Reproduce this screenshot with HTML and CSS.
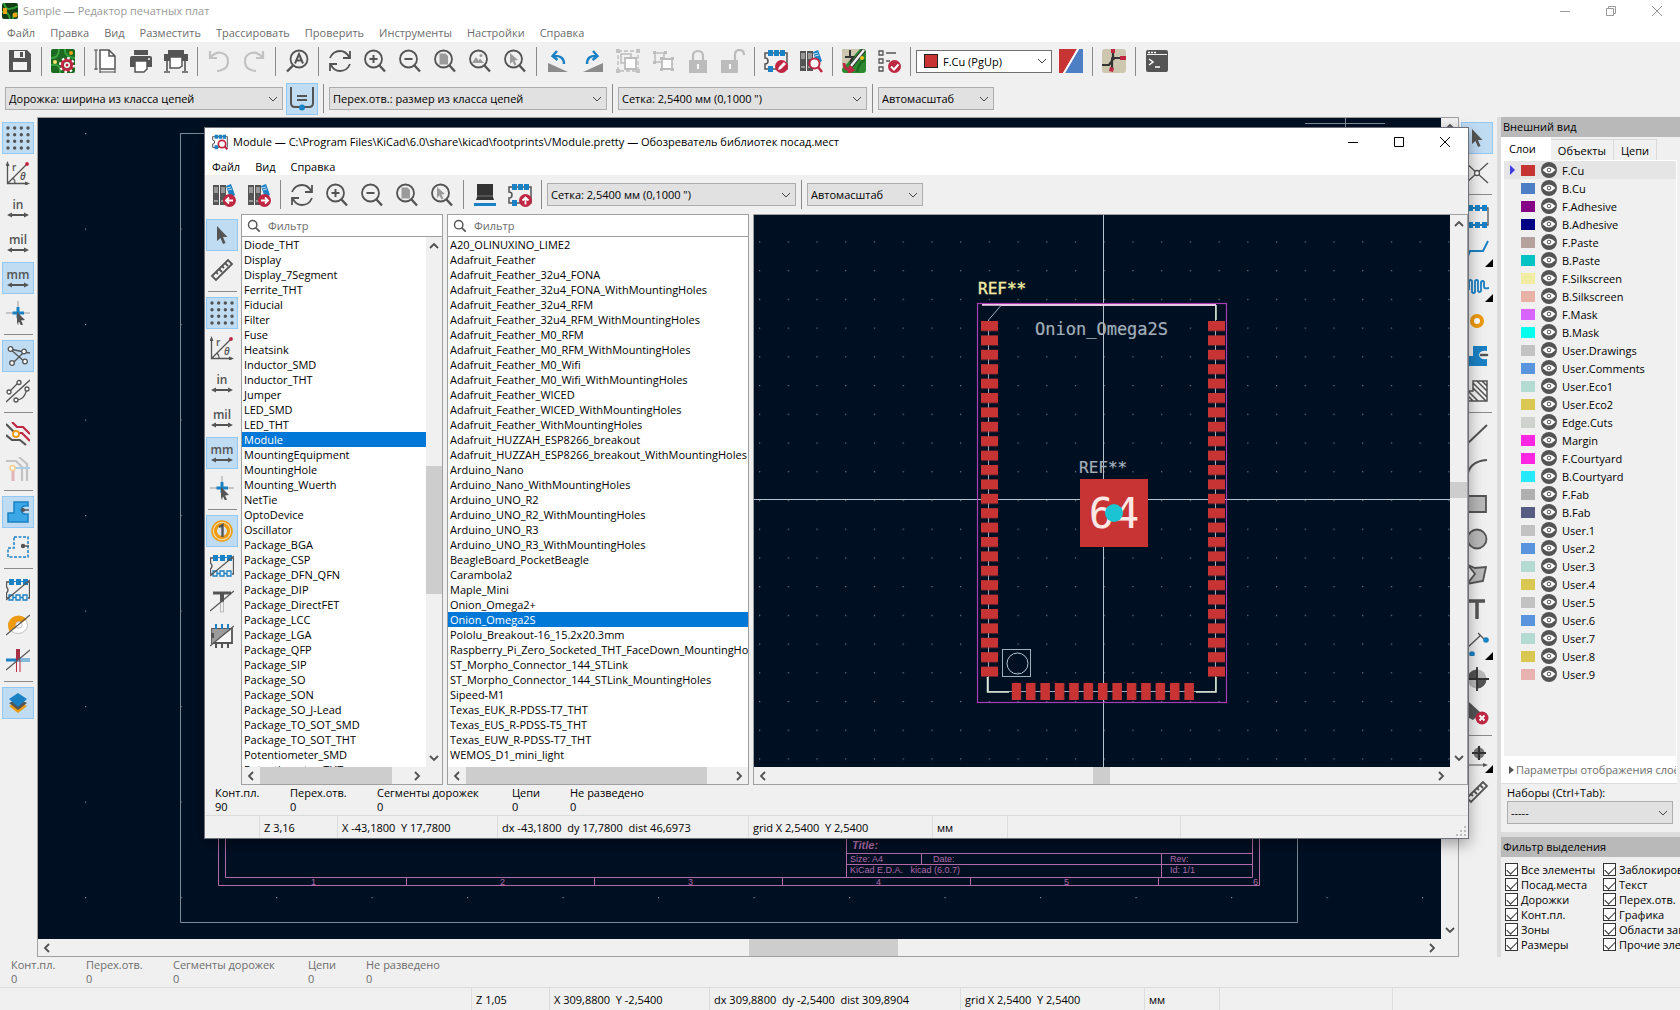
FILE: index.html
```html
<!DOCTYPE html>
<html lang="ru">
<head>
<meta charset="utf-8">
<title>Sample — Редактор печатных плат</title>
<link rel="stylesheet" href="styles.css">
</head>
<body>
<svg class="sprite" aria-hidden="true">
<defs>
<g id="lens"><circle cx="10.500" cy="10" r="8.500" fill="none" stroke="#545454" stroke-width="1.800"/><path d="M16.500 16.500L22 22.500" stroke="#545454" stroke-width="2.400"/></g>
<g id="badge"><circle cx="17.500" cy="17.500" r="6.500" fill="#bf2641"/></g>
<g id="chip"><path d="M1 4H23V20H1V15a3 3 0 0 0 0-6Z" fill="none" stroke="#545454" stroke-width="1.500"/><path d="M4 1h5v6H4zM10 1h5v6h-5zM16 1h5v6h-5zM4 17h5v6H4z" fill="#1a81c4"/></g>
<g id="books"><path d="M1 2h6v20H1zM8 2h6v20H8z" fill="#545454"/><path d="M2 5h4M2 7h4M2 9h4M2 18h4M9 5h4M9 7h4M9 9h4M9 18h4" stroke="#ddd" stroke-width="1"/><path d="M14 3l5-2 4 11-5 3z" fill="#1a81c4"/><path d="M15 5l4-1M16 7l4-1" stroke="#bfe0f5"/></g>
<g id="slash"><path d="M0 22L24 2" stroke="#545454" stroke-width="1.200"/></g>
<g id="dblarrow"><path d="M3 19H21" stroke="#545454" stroke-width="2"/><path d="M1 19l5-2.500v5zM23 19l-5-2.500v5z" fill="#545454"/></g>
</defs>
<symbol id="i-app" viewBox="0 0 16 16"><rect width="16" height="16" rx="2" fill="#123d16"/><path d="M2 0q1 6 5 6t9-3M0 9q6-2 8 7M11 16q0-6 5-6" fill="none" stroke="#2f9b35" stroke-width="2"/><path d="M1 5h4v6H1z" fill="#e8a316"/><circle cx="13" cy="12" r="2.500" fill="#e8a316"/></symbol>
<symbol id="i-save" viewBox="0 0 24 24"><path d="M1 1h18l4 4v18H1z" fill="#545454"/><path d="M6 2h11v7H6zM5 13h14v8H5z" fill="#f3f3f3"/><path d="M12 3h3v5h-3z" fill="#545454"/></symbol>
<symbol id="i-setup" viewBox="0 0 24 24"><rect width="24" height="24" rx="2" fill="#1d6b22"/><path d="M0 9q8 0 8-9M0 16q10-2 9 8M14 0q-1 8 10 9" fill="none" stroke="#39a340" stroke-width="2"/><circle cx="4" cy="13" r="2" fill="#f5e56b"/><circle cx="20" cy="4" r="2" fill="#e8a316"/><circle cx="16" cy="16" r="5" fill="none" stroke="#bf2641" stroke-width="3.500"/><circle cx="16" cy="16" r="7" fill="none" stroke="#fff" stroke-width="2" stroke-dasharray="2.500 3"/><circle cx="16" cy="16" r="3" fill="#fff"/><circle cx="16" cy="16" r="1.500" fill="#bf2641"/></symbol>
<symbol id="i-page" viewBox="0 0 24 24"><path d="M6 1h9l6 6v13H6zM15 1v6h6" fill="#fff" stroke="#545454" stroke-width="1.500"/><path d="M2 1v20M0 1h4M0 20h4M6 23h15M6 21v3M21 21v3" stroke="#545454" stroke-width="1.200"/></symbol>
<symbol id="i-print" viewBox="0 0 24 24"><path d="M5 1h14v5H5z" fill="#545454"/><path d="M1 9q0-2 2-2h18q2 0 2 2v9H1z" fill="#545454"/><path d="M6 12h12v8l-3 3H6z" fill="#fff" stroke="#545454" stroke-width="1.500"/><circle cx="20" cy="10" r="1" fill="#fff"/></symbol>
<symbol id="i-plot" viewBox="0 0 24 24"><path d="M4 1h16v4H4zM0 5h24v7H0z" fill="#545454"/><path d="M6 8h12v9l-3 2H6z" fill="#fff" stroke="#545454" stroke-width="1.500"/><path d="M3 12v10M21 12v10M0 23h6M18 23h6" stroke="#545454" stroke-width="1.600"/></symbol>
<symbol id="i-undo" viewBox="0 0 24 24"><path d="M3 2v7h7M3.500 8.500Q9 2 15 4t6 8-4 8-7 2" fill="none" stroke="#c2c2c2" stroke-width="2.200"/></symbol>
<symbol id="i-redo" viewBox="0 0 24 24"><path d="M21 2v7h-7M20.500 8.500Q15 2 9 4t-6 8 4 8 7 2" fill="none" stroke="#c2c2c2" stroke-width="2.200"/></symbol>
<symbol id="i-find" viewBox="0 0 24 24"><circle cx="14" cy="10" r="8.500" fill="none" stroke="#545454" stroke-width="1.800"/><path d="M8 16.500L2 22.500" stroke="#545454" stroke-width="2.400"/><path d="M10 14.500L14 5l4 9.500M11.500 11.500h5" fill="none" stroke="#545454" stroke-width="2"/></symbol>
<symbol id="i-refresh" viewBox="0 0 24 24"><path d="M2 9q3-7 10-7 6 0 9 6M22 2v7h-7M22 15q-3 7-10 7-6 0-9-6M2 22v-7h7" fill="none" stroke="#545454" stroke-width="1.800"/></symbol>
<symbol id="i-zin" viewBox="0 0 24 24"><use href="#lens"/><path d="M10.500 6v8M6.500 10h8" stroke="#545454" stroke-width="2"/></symbol>
<symbol id="i-zout" viewBox="0 0 24 24"><use href="#lens"/><path d="M6.500 10h8" stroke="#545454" stroke-width="2"/></symbol>
<symbol id="i-zfit" viewBox="0 0 24 24"><use href="#lens"/><path d="M6.500 4.500h6l2.500 2.500v8.500H6.500z" fill="#9b9b9b"/></symbol>
<symbol id="i-zobj" viewBox="0 0 24 24"><use href="#lens"/><path d="M4 14l4-6 2.500 3.500L12 9.500l4 4.500z" fill="#9b9b9b"/><circle cx="13" cy="6.500" r="1.500" fill="#9b9b9b"/></symbol>
<symbol id="i-zsel" viewBox="0 0 24 24"><use href="#lens"/><path d="M7 4l8 7-3.500.5 2 4-2 1-2-4L7 15z" fill="#9b9b9b"/></symbol>
<symbol id="i-rccw" viewBox="0 0 24 24"><path d="M2 14v9h20z" fill="#8b8b8b"/><path d="M11 2L6.500 7l5 4M7 7q11-1 11 8" fill="none" stroke="#1a81c4" stroke-width="2.400"/></symbol>
<symbol id="i-rcw" viewBox="0 0 24 24"><path d="M22 14v9H2z" fill="#8b8b8b"/><path d="M12 2l4.500 5-5 4M16 7Q6 6 6 15" fill="none" stroke="#1a81c4" stroke-width="2.400"/></symbol>
<symbol id="i-group" viewBox="0 0 24 24"><path d="M2 2h20v20H2z" fill="none" stroke="#bcbcbc" stroke-width="1.300" stroke-dasharray="4 2"/><path d="M0 0h4v4H0zM20 0h4v4h-4zM0 20h4v4H0zM20 20h4v4h-4z" fill="#c2c2c2"/><path d="M5 5h10v9H5z" fill="none" stroke="#bcbcbc" stroke-width="1.500"/><path d="M9 9h11v11H9z" fill="#fff" stroke="#bcbcbc" stroke-width="1.800"/></symbol>
<symbol id="i-ungroup" viewBox="0 0 24 24"><path d="M4 4h9v9H4z" fill="none" stroke="#bcbcbc" stroke-width="1.500"/><path d="M2 2h3v3H2zM13 2h3v3h-3zM2 12h3v3H2z" fill="#bcbcbc"/><path d="M11 10h10v10H11z" fill="#fff" stroke="#bcbcbc" stroke-width="1.800"/><path d="M9 8h3v3H9zM20 8h3v3h-3zM9 19h3v3H9zM20 19h3v3h-3z" fill="#bcbcbc"/></symbol>
<symbol id="i-lock" viewBox="0 0 24 24"><path d="M3 11h18v13H3z" fill="#bcbcbc"/><path d="M7 12V7q0-5 5-5t5 5v5" fill="none" stroke="#bcbcbc" stroke-width="2.200"/><path d="M11 15h2v5h-2z" fill="#fff"/></symbol>
<symbol id="i-unlock" viewBox="0 0 24 24"><path d="M0 11h17v13H0z" fill="#bcbcbc"/><path d="M14 12V6q0-5 4.500-5T23 6" fill="none" stroke="#bcbcbc" stroke-width="2.200"/><path d="M8 15h2v5H8z" fill="#fff"/></symbol>
<symbol id="i-fped" viewBox="0 0 24 24"><use href="#chip"/><use href="#badge"/><path d="M14 21l1-3 5-5 2 2-5 5z" fill="#fff"/></symbol>
<symbol id="i-fplib" viewBox="0 0 24 24"><use href="#books"/><circle cx="15.500" cy="14.500" r="5" fill="#fff" stroke="#bf2641" stroke-width="2"/><path d="M19 18l4 5" stroke="#bf2641" stroke-width="2.500"/></symbol>
<symbol id="i-fpbrowse" viewBox="0 0 24 24"><use href="#chip"/><circle cx="15" cy="15" r="5.500" fill="#fff" stroke="#bf2641" stroke-width="2.500"/><path d="M19 19l4 4" stroke="#bf2641" stroke-width="3"/></symbol>
<symbol id="i-update" viewBox="0 0 24 24"><rect width="24" height="24" rx="3" fill="#2c8a31"/><path d="M3 0h15L0 20V3q0-3 3-3z" fill="#cdc7b0"/><path d="M8 1v7M3 8h8l-3 5" fill="none" stroke="#333" stroke-width="2"/><path d="M23 11q-6 2-8 12" fill="none" stroke="#1d6b22" stroke-width="2.500"/><path d="M22 1L9 17" stroke="#333" stroke-width="4.500"/><path d="M22 1L9 17" stroke="#f0f0f0" stroke-width="2.500"/><circle cx="20" cy="9" r="2" fill="#f2c21a"/><path d="M2 14q0 7 7 7M7 17l4 4-5 3" fill="none" stroke="#bf2641" stroke-width="2.800"/></symbol>
<symbol id="i-drc" viewBox="0 0 24 24"><path d="M2 2h4v4H2zM2 10h4v4H2zM2 18h4v4H2zM9 4h10M9 12h4" fill="none" stroke="#545454" stroke-width="1.300"/><use href="#badge"/><path d="M14 17.500l3 3 4.500-5" fill="none" stroke="#fff" stroke-width="2"/></symbol>
<symbol id="i-pair" viewBox="0 0 24 24"><path d="M0 0h18L4 24H0z" fill="#c83434"/><path d="M20 0h4v24H6z" fill="#4d7fc4"/><path d="M18 0h2L6 24H4z" fill="#fff"/></symbol>
<symbol id="i-route" viewBox="0 0 24 24"><rect width="24" height="24" rx="3" fill="#cdc7b0"/><path d="M11 3v6l-1 2v8M11 9h8M10 12l-3 4H0" fill="none" stroke="#333" stroke-width="2.200"/><path d="M9 0h4v4H9zM18 7h6v4h-6zM8 18l4 1-1 4-4-1z" fill="#bf2641"/><circle cx="11" cy="9.500" r="2" fill="#333"/></symbol>
<symbol id="i-console" viewBox="0 0 24 24"><rect x="1" y="1" width="22" height="22" rx="2" fill="#545454"/><path d="M2 5.500h20" stroke="#f0f0f0"/><path d="M3 3.500h2M6 3.500h2M9 3.500h2" stroke="#fff" stroke-width="1.500"/><path d="M4 10l4 3-4 3M10 18h5" fill="none" stroke="#fff" stroke-width="1.500"/></symbol>
<symbol id="i-netwidth" viewBox="0 0 24 24"><path d="M1 0v16q0 4 4 4h14q4 0 4-4V0M7 9h10M7 13h10" fill="none" stroke="#545454" stroke-width="2"/><circle cx="12" cy="20.500" r="3" fill="#1a81c4"/></symbol>
<symbol id="i-grid" viewBox="0 0 24 24"><path d="M2 2h20.100M2 8.700h20.100M2 15.300h20.100M2 22h20.100" stroke="#545454" stroke-width="3.400" stroke-linecap="round" stroke-dasharray="0 6.670"/></symbol>
<symbol id="i-polar" viewBox="0 0 24 24"><path d="M1.500 3v19.500H22M2 22L21 3M7 17q2 2 2 5" fill="none" stroke="#545454" stroke-width="1.300"/><path d="M1.500 0l2 5h-4zM24 22.500l-5 2v-4z" fill="#545454"/><circle cx="21" cy="3" r="1.900" fill="#bf2641"/><text x="6" y="10" class="glyph">r</text><text x="14" y="19" class="glyph glyph-i">θ</text></symbol>
<symbol id="i-in" viewBox="0 0 24 24"><text x="12" y="13" text-anchor="middle" class="unit">in</text><use href="#dblarrow"/></symbol>
<symbol id="i-mil" viewBox="0 0 24 24"><text x="12" y="13" text-anchor="middle" class="unit">mil</text><use href="#dblarrow"/></symbol>
<symbol id="i-mm" viewBox="0 0 24 24"><text x="12" y="13" text-anchor="middle" class="unit">mm</text><use href="#dblarrow"/></symbol>
<symbol id="i-cursor" viewBox="0 0 24 24"><path d="M0 12h24M12 0v24" stroke="#9b9b9b"/><path d="M12 6v11M6.500 12H18" stroke="#1a81c4" stroke-width="3"/><path d="M11 11l8 8-4 .5 2 4-2 1-2-4-2 2.500z" fill="#545454"/></symbol>
<symbol id="i-rats" viewBox="0 0 24 24"><path d="M4 5l14 3 6 1M18 8L6 20M4 5l15 13" fill="none" stroke="#545454" stroke-width="1.300"/><g fill="#fff" stroke="#545454" stroke-width="1.300"><circle cx="4.500" cy="5" r="2.300"/><circle cx="18" cy="7.500" r="2.300"/><circle cx="6" cy="19" r="2.300"/><circle cx="19" cy="17.500" r="2.300"/></g></symbol>
<symbol id="i-curve" viewBox="0 0 24 24"><path d="M0 23L24 1M3 13L13 3M10 21q9 0 11-12" fill="none" stroke="#545454" stroke-width="1.300"/><g fill="#fff" stroke="#545454" stroke-width="1.300"><circle cx="3" cy="13" r="2"/><circle cx="13" cy="3.500" r="2"/><circle cx="21" cy="10" r="2"/><circle cx="10" cy="21" r="2"/></g></symbol>
<symbol id="i-nets" viewBox="0 0 24 24"><path d="M6 0l5 5h6l7 7M12 11h4l8 8" fill="none" stroke="#bf2641" stroke-width="2.200"/><path d="M0 2l8 8M0 13l6 5h8l6 5" fill="none" stroke="#545454" stroke-width="2.200"/><circle cx="10" cy="12" r="3" fill="#fff" stroke="#ee9a0d" stroke-width="1.800"/></symbol>
<symbol id="i-nethl" viewBox="0 0 24 24"><path d="M0 4h10l6 6v14M13 0l8 7v17" fill="none" stroke="#c2c2c2" stroke-width="2.200"/><path d="M7 12v12" stroke="#dfb3b8" stroke-width="3"/><path d="M8 11h16" stroke="#a9cfe8" stroke-width="2"/><circle cx="6.500" cy="11" r="2.500" fill="#fff" stroke="#f3cf8c" stroke-width="1.500"/></symbol>
<symbol id="i-zonefill" viewBox="0 0 24 24"><path d="M8 2h14v4q-6-1-7 4 1 5 7 4v8H2v-9h6z" fill="#3ba7e6" stroke="#1a81c4" stroke-width="1.500"/><circle cx="17" cy="10" r="2" fill="#545454"/><path d="M17 10h6" stroke="#545454" stroke-width="1.500"/></symbol>
<symbol id="i-zoneline" viewBox="0 0 24 24"><path d="M8 2h14v20H2v-9h6z" fill="none" stroke="#1a81c4" stroke-width="1.500" stroke-dasharray="3 1.500"/><circle cx="17" cy="11" r="2.200" fill="#545454"/><path d="M17 11h6" stroke="#545454" stroke-width="1.500"/></symbol>
<symbol id="i-fpsk" viewBox="0 0 24 24"><path d="M3 4H.500v5q3 3 0 6v5H3M22 4h1.500v16H22" fill="none" stroke="#545454" stroke-width="1.300"/><path d="M3 1h5v6H3zM10 1h5v6h-5zM17 1h5v6h-5zM3 3h18v1H3z" fill="#1a81c4"/><path d="M3 17h4v5H3zM10 17h4v5h-4zM17 17h4v5h-4zM7 19.500h3M14 19.500h3" fill="none" stroke="#1a81c4" stroke-width="1.300"/><use href="#slash"/></symbol>
<symbol id="i-padsk" viewBox="0 0 24 24"><ellipse cx="12" cy="12" rx="9.500" ry="8.500" fill="#fff" stroke="#c2c2c2"/><path d="M3 18Q0 8 7 4t14 2l-7 5q-4-1-4 4z" fill="#ee9a0d"/><circle cx="13" cy="12" r="3.200" fill="#fff" stroke="#c2c2c2"/><use href="#slash"/></symbol>
<symbol id="i-tracksk" viewBox="0 0 24 24"><path d="M0 12h12" stroke="#1a81c4" stroke-width="3"/><path d="M12 1v11" stroke="#a93043" stroke-width="4"/><path d="M12 11h12M12 13h12" stroke="#1a81c4" stroke-width="1"/><path d="M10.500 12v12M14 12v12" stroke="#bf2641" stroke-width="1"/><use href="#slash"/></symbol>
<symbol id="i-layers" viewBox="0 0 24 24"><path d="M3 15l9 7 9-7-9-4z" fill="#ee9a0d"/><path d="M3 12l9 7 9-7-9-4z" fill="#545454"/><path d="M3 8l9-6 9 6-9 8z" fill="#1a81c4"/></symbol>
<symbol id="i-arrow" viewBox="0 0 24 24"><path d="M7 3v15l3.500-3 2.500 6 2.500-1-2.500-6h4.500z" fill="#545454"/></symbol>
<symbol id="i-ruler" viewBox="0 0 24 24"><path d="M2 18L18 2l4 4L6 22zM6 14l2 2M9 11l3 3M12 8l2 2M15 5l3 3" fill="none" stroke="#545454" stroke-width="1.800"/></symbol>
<symbol id="i-ratsx" viewBox="0 0 24 24"><path d="M1 2l22 20M23 2L1 22" stroke="#545454" stroke-width="1.300"/><circle cx="12" cy="12" r="2.500" fill="#fff" stroke="#545454" stroke-width="1.300"/></symbol>
<symbol id="i-fpadd" viewBox="0 0 24 24"><path d="M2 4h21v17H2" fill="none" stroke="#545454" stroke-width="1.300"/><path d="M3 1h5v6H3zM10 1h5v6h-5zM17 1h5v6h-5zM3 18h5v6H3zM10 18h5v6h-5zM17 18h5v6h-5zM3 3h18v2H3zM3 20h18v2H3z" fill="#1a81c4"/></symbol>
<symbol id="i-track" viewBox="0 0 24 24"><path d="M1 22l4-10h13L23 2" fill="none" stroke="#1a81c4" stroke-width="2"/></symbol>
<symbol id="i-meander" viewBox="0 0 24 24"><path d="M0 15h4V7q1-2 3 0v11q2 2 3 0V7q2-2 3 0v10q1 2 3 0V8q2-2 3 0v5q0 2 5 1" fill="none" stroke="#1a81c4" stroke-width="1.800"/></symbol>
<symbol id="i-via" viewBox="0 0 24 24"><circle cx="12" cy="12" r="5" fill="#fff" stroke="#ee9a0d" stroke-width="4"/></symbol>
<symbol id="i-zone" viewBox="0 0 24 24"><path d="M8 2h14v5q-7-1-8 4 1 5 8 4v7H1V12h7z" fill="#1a81c4"/><path d="M16 11h6" stroke="#545454" stroke-width="2.500" stroke-linecap="round"/></symbol>
<symbol id="i-keepout" viewBox="0 0 24 24"><path d="M8 2h14v20H1V12h7zM8 4l14 14M8 9l13 13M12 2l10 10M17 2l5 5M3 12l10 10M1 15l7 7" fill="none" stroke="#545454" stroke-width="1.500"/></symbol>
<symbol id="i-line" viewBox="0 0 24 24"><path d="M2 22L22 3" stroke="#545454" stroke-width="2"/></symbol>
<symbol id="i-arc" viewBox="0 0 24 24"><path d="M2 22Q3 4 22 3" fill="none" stroke="#545454" stroke-width="2"/></symbol>
<symbol id="i-rect" viewBox="0 0 24 24"><path d="M2 4h19v16H2z" fill="#b8b8b8" stroke="#545454" stroke-width="1.800"/></symbol>
<symbol id="i-circ" viewBox="0 0 24 24"><circle cx="12" cy="12" r="9.500" fill="#b8b8b8" stroke="#545454" stroke-width="1.800"/></symbol>
<symbol id="i-poly" viewBox="0 0 24 24"><path d="M3 3l7 3 11-1-3 14-16 3 8-10z" fill="#b8b8b8" stroke="#545454" stroke-width="1.800"/></symbol>
<symbol id="i-text" viewBox="0 0 24 24"><path d="M4 4h16M12 4v18" stroke="#545454" stroke-width="3.500"/></symbol>
<symbol id="i-dim" viewBox="0 0 24 24"><path d="M2 16L16 3M13 1l7 7" stroke="#545454" stroke-width="1.300"/><circle cx="21" cy="8" r="2.800" fill="#1a81c4"/><circle cx="7" cy="22" r="2.800" fill="#1a81c4"/></symbol>
<symbol id="i-target" viewBox="0 0 24 24"><circle cx="12" cy="12" r="9.500" fill="#b8b8b8"/><path d="M12 2.500V12H2.500A9.500 9.500 0 0 1 12 2.500zM12 21.500V12h9.500A9.500 9.500 0 0 1 12 21.500z" fill="#545454"/><path d="M12 0v24M0 12h24" stroke="#333" stroke-width="1.800"/></symbol>
<symbol id="i-del" viewBox="0 0 24 24"><path d="M4 0l12 11-8 7-4-2z" fill="#545454"/><circle cx="17" cy="16" r="6.500" fill="#bf2641"/><path d="M14.500 13.500l5 5M19.500 13.500l-5 5" stroke="#fff" stroke-width="2"/></symbol>
<symbol id="i-origin" viewBox="0 0 24 24"><circle cx="14" cy="8" r="5.500" fill="#777"/><path d="M14 1v14M7 8h14" stroke="#333" stroke-width="2.200"/><path d="M0 20h20" stroke="#545454"/><path d="M23 20l-5 2v-4z" fill="#545454"/></symbol>
<symbol id="i-libprev" viewBox="0 0 24 24"><use href="#books"/><use href="#badge"/><path d="M21 17.500h-7M17 14.500l-3 3 3 3" fill="none" stroke="#fff" stroke-width="1.800"/></symbol>
<symbol id="i-libnext" viewBox="0 0 24 24"><use href="#books"/><use href="#badge"/><path d="M14 17.500h7M18 14.500l3 3-3 3" fill="none" stroke="#fff" stroke-width="1.800"/></symbol>
<symbol id="i-3d" viewBox="0 0 24 24"><path d="M4 1h16v13l1 3H3l1-3z" fill="#333"/><path d="M4 13h16" stroke="#777"/><path d="M1 20h22v3H1z" fill="#1a81c4"/></symbol>
<symbol id="i-fpins" viewBox="0 0 24 24"><use href="#chip"/><use href="#badge"/><path d="M17.500 21.500v-7M14.500 17.500l3-3 3 3" fill="none" stroke="#fff" stroke-width="1.800"/></symbol>
<symbol id="i-padnum" viewBox="0 0 24 24"><circle cx="12" cy="12" r="10" fill="#f4dcae" stroke="#ee9a0d" stroke-width="1.500"/><circle cx="12" cy="12" r="6.500" fill="#d9e3ea" stroke="#ee9a0d" stroke-width="3"/><path d="M9 8L12.500 6v12" fill="none" stroke="#545454" stroke-width="2.400"/></symbol>
<symbol id="i-textsk" viewBox="0 0 24 24"><path d="M3 4h18" stroke="#545454" stroke-width="3"/><path d="M12 4v9" stroke="#545454" stroke-width="4"/><path d="M10.500 13h3v10h-3z" fill="none" stroke="#b8b8b8"/><use href="#slash"/></symbol>
<symbol id="i-graphsk" viewBox="0 0 24 24"><path d="M2 5h20v14H2z" fill="#f8f8f8" stroke="#545454" stroke-width="1.800"/><path d="M2 5h20L3 19H2z" fill="#9b9b9b"/><path d="M1 9h3v5H1z" fill="#545454"/><path d="M6 0v5M12 0v5M18 0v5" stroke="#1a81c4" stroke-width="2"/><path d="M6 19v5M12 19v5M18 19v5" stroke="#545454" stroke-width="2"/><use href="#slash"/></symbol>
<symbol id="i-eye" viewBox="0 0 16 16"><circle cx="8" cy="8" r="8" fill="#545454"/><path d="M1.500 8Q8 1 14.500 8 8 15 1.500 8z" fill="#fff"/><circle cx="8" cy="8" r="1.800" fill="#fff" stroke="#545454" stroke-width="1"/></symbol>
<symbol id="i-lens" viewBox="0 0 16 16"><circle cx="6.500" cy="6.500" r="4.800" fill="none" stroke="#545454" stroke-width="1.600"/><path d="M10 10l4.500 4.500" stroke="#545454" stroke-width="2"/></symbol>
<symbol id="c-down" viewBox="0 0 10 10"><path d="M1 3l4 4 4-4" fill="none" stroke="currentColor"/></symbol>
<symbol id="s-up" viewBox="0 0 10 10"><path d="M1 7l4-4 4 4" fill="none" stroke="#505050" stroke-width="1.800"/></symbol>
<symbol id="s-down" viewBox="0 0 10 10"><path d="M1 3l4 4 4-4" fill="none" stroke="#505050" stroke-width="1.800"/></symbol>
<symbol id="s-left" viewBox="0 0 10 10"><path d="M7 1L3 5l4 4" fill="none" stroke="#505050" stroke-width="1.800"/></symbol>
<symbol id="s-right" viewBox="0 0 10 10"><path d="M3 1l4 4-4 4" fill="none" stroke="#505050" stroke-width="1.800"/></symbol>
<symbol id="w-min" viewBox="0 0 12 12"><path d="M1 6.500h10" stroke="currentColor"/></symbol>
<symbol id="w-max" viewBox="0 0 12 12"><path d="M1.500 1.500h9v9h-9z" fill="none" stroke="currentColor"/></symbol>
<symbol id="w-rest" viewBox="0 0 12 12"><path d="M1.500 3.500h7v7h-7zM3.500 3V1.500h7v7H9" fill="none" stroke="currentColor"/></symbol>
<symbol id="w-close" viewBox="0 0 12 12"><path d="M1 1l10 10M11 1L1 11" stroke="currentColor"/></symbol>
</svg>

<div class="app">
  <header class="titlebar titlebar-main">
    <svg class="app-icon"><use href="#i-app"/></svg>
    <h1 class="title">Sample — Редактор печатных плат</h1>
    <div class="win-buttons">
      <button aria-label="Свернуть"><svg><use href="#w-min"/></svg></button>
      <button aria-label="Восстановить"><svg><use href="#w-rest"/></svg></button>
      <button aria-label="Закрыть"><svg><use href="#w-close"/></svg></button>
    </div>
  </header>
  <nav class="menu menu-main">
    <button>Файл</button><button>Правка</button><button>Вид</button><button>Разместить</button><button>Трассировать</button><button>Проверить</button><button>Инструменты</button><button>Настройки</button><button>Справка</button>
  </nav>
  <div class="toolbar toolbar-main">
    <button class="tool" aria-label="Сохранить"><svg><use href="#i-save"/></svg></button>
    <i class="sep"></i>
    <button class="tool" aria-label="Параметры платы"><svg><use href="#i-setup"/></svg></button>
    <i class="sep"></i>
    <button class="tool" aria-label="Параметры страницы"><svg><use href="#i-page"/></svg></button>
    <button class="tool" aria-label="Печать"><svg><use href="#i-print"/></svg></button>
    <button class="tool" aria-label="Чертёж"><svg><use href="#i-plot"/></svg></button>
    <i class="sep"></i>
    <button class="tool" aria-label="Отменить"><svg><use href="#i-undo"/></svg></button>
    <button class="tool" aria-label="Повторить"><svg><use href="#i-redo"/></svg></button>
    <i class="sep"></i>
    <button class="tool" aria-label="Найти"><svg><use href="#i-find"/></svg></button>
    <i class="sep"></i>
    <button class="tool" aria-label="Обновить"><svg><use href="#i-refresh"/></svg></button>
    <button class="tool" aria-label="Увеличить"><svg><use href="#i-zin"/></svg></button>
    <button class="tool" aria-label="Уменьшить"><svg><use href="#i-zout"/></svg></button>
    <button class="tool" aria-label="Вписать лист"><svg><use href="#i-zfit"/></svg></button>
    <button class="tool" aria-label="Вписать объекты"><svg><use href="#i-zobj"/></svg></button>
    <button class="tool" aria-label="Масштаб выделения"><svg><use href="#i-zsel"/></svg></button>
    <i class="sep"></i>
    <button class="tool" aria-label="Повернуть влево"><svg><use href="#i-rccw"/></svg></button>
    <button class="tool" aria-label="Повернуть вправо"><svg><use href="#i-rcw"/></svg></button>
    <button class="tool" aria-label="Группировать"><svg><use href="#i-group"/></svg></button>
    <button class="tool" aria-label="Разгруппировать"><svg><use href="#i-ungroup"/></svg></button>
    <button class="tool" aria-label="Заблокировать"><svg><use href="#i-lock"/></svg></button>
    <button class="tool" aria-label="Разблокировать"><svg><use href="#i-unlock"/></svg></button>
    <i class="sep"></i>
    <button class="tool" aria-label="Редактор посад.мест"><svg><use href="#i-fped"/></svg></button>
    <button class="tool" aria-label="Библиотеки посад.мест"><svg><use href="#i-fplib"/></svg></button>
    <i class="sep"></i>
    <button class="tool" aria-label="Обновить плату"><svg><use href="#i-update"/></svg></button>
    <button class="tool" aria-label="Проверка правил"><svg><use href="#i-drc"/></svg></button>
    <i class="sep"></i>
    <div class="combo combo-layer"><span class="layer-chip"></span><select aria-label="Слой"><option>F.Cu (PgUp)</option></select><svg><use href="#c-down"/></svg></div>
    <button class="tool" aria-label="Пара слоёв"><svg><use href="#i-pair"/></svg></button>
    <i class="sep"></i>
    <button class="tool" aria-label="Редактор схем"><svg><use href="#i-route"/></svg></button>
    <i class="sep"></i>
    <button class="tool" aria-label="Консоль"><svg><use href="#i-console"/></svg></button>
  </div>
  <div class="toolbar toolbar-sub">
    <div class="combo combo-xl"><select aria-label="Ширина дорожки"><option>Дорожка: ширина из класса цепей</option></select><svg><use href="#c-down"/></svg></div>
    <button class="tool on" aria-label="Ширина из цепи"><svg><use href="#i-netwidth"/></svg></button>
    <i class="sep"></i>
    <div class="combo combo-xl"><select aria-label="Размер отверстия"><option>Перех.отв.: размер из класса цепей</option></select><svg><use href="#c-down"/></svg></div>
    <i class="sep"></i>
    <div class="combo combo-l"><select aria-label="Сетка"><option>Сетка: 2,5400 мм (0,1000 ")</option></select><svg><use href="#c-down"/></svg></div>
    <i class="sep"></i>
    <div class="combo combo-m"><select aria-label="Масштаб"><option>Автомасштаб</option></select><svg><use href="#c-down"/></svg></div>
  </div>

  <main class="workspace">
    <div class="side-tools side-left">
      <button class="tool on" aria-label="Сетка"><svg><use href="#i-grid"/></svg></button>
      <button class="tool" aria-label="Полярные координаты"><svg><use href="#i-polar"/></svg></button>
      <button class="tool" aria-label="Дюймы"><svg><use href="#i-in"/></svg></button>
      <button class="tool" aria-label="Милы"><svg><use href="#i-mil"/></svg></button>
      <button class="tool on" aria-label="Миллиметры"><svg><use href="#i-mm"/></svg></button>
      <button class="tool" aria-label="Перекрестие"><svg><use href="#i-cursor"/></svg></button>
      <i class="sep"></i>
      <button class="tool on" aria-label="Связи"><svg><use href="#i-rats"/></svg></button>
      <button class="tool" aria-label="Кривые связи"><svg><use href="#i-curve"/></svg></button>
      <i class="sep"></i>
      <button class="tool" aria-label="Затемнение слоёв"><svg><use href="#i-nets"/></svg></button>
      <button class="tool" aria-label="Подсветка цепи"><svg><use href="#i-nethl"/></svg></button>
      <i class="sep"></i>
      <button class="tool on" aria-label="Заливка зон"><svg><use href="#i-zonefill"/></svg></button>
      <button class="tool" aria-label="Контур зон"><svg><use href="#i-zoneline"/></svg></button>
      <i class="sep"></i>
      <button class="tool" aria-label="Контур контактов"><svg><use href="#i-fpsk"/></svg></button>
      <button class="tool" aria-label="Контур отверстий"><svg><use href="#i-padsk"/></svg></button>
      <button class="tool" aria-label="Контур дорожек"><svg><use href="#i-tracksk"/></svg></button>
      <i class="sep"></i>
      <button class="tool on" aria-label="Панель слоёв"><svg><use href="#i-layers"/></svg></button>
    </div>

    <section class="viewport">
      <svg class="canvas">
        <defs><pattern id="dots-main" x="47" y="15" width="95.500" height="95.500" patternUnits="userSpaceOnUse"><rect width="1.200" height="1.200" fill="#7f8c98"/></pattern></defs>
        <rect width="100%" height="100%" fill="url(#dots-main)"/>
        <path d="M142.500 15.500H1259.500V804.500H142.500Z" fill="none" stroke="#7d8b98"/>
        <path d="M1267 5.500H1347M1307.500 0V20" stroke="#7d8b98"/>
        <path d="M180.500 30.500H1221.500V767.500H180.500ZM187.500 37.500H1214.500V759.500H187.500ZM368.500 759V767M556.500 759V767M744.500 759V767M932.500 759V767M1120.500 759V767M808.500 700V759M808 735.500H1214M808 746.500H1214M883.500 735V746M1123.500 735V759" fill="none" stroke="#b06aa8"/>
        <g class="sheet-text">
          <text x="814" y="731" class="sheet-title">Title:</text>
          <text x="812" y="744">Size: A4</text><text x="895" y="744">Date:</text><text x="1132" y="744">Rev:</text>
          <text x="812" y="755">KiCad E.D.A.&#160;&#160; kicad (6.0.7)</text><text x="1132" y="755">Id: 1/1</text>
          <text x="273" y="767">1</text><text x="462" y="767">2</text><text x="650" y="767">3</text><text x="838" y="767">4</text><text x="1026" y="767">5</text><text x="1215" y="767">6</text>
        </g>
      </svg>
      <div class="sb sb-v"><svg><use href="#s-up"/></svg><div class="track" style="--before:300;--size:100;--after:400"><span class="thumb"></span></div><svg><use href="#s-down"/></svg></div>
      <div class="sb sb-h"><svg><use href="#s-left"/></svg><div class="track" style="--before:694;--size:149;--after:526"><span class="thumb"></span></div><svg><use href="#s-right"/></svg></div>
    </section>

    <div class="side-tools side-right">
      <button class="tool on" aria-label="Выбор"><svg><use href="#i-arrow"/></svg></button>
      <button class="tool" aria-label="Локальные связи"><svg><use href="#i-ratsx"/></svg></button>
      <i class="sep"></i>
      <button class="tool" aria-label="Добавить посад.место"><svg><use href="#i-fpadd"/></svg></button>
      <button class="tool more" aria-label="Дорожка"><svg><use href="#i-track"/></svg></button>
      <button class="tool more" aria-label="Настройка длины"><svg><use href="#i-meander"/></svg></button>
      <button class="tool" aria-label="Отверстие"><svg><use href="#i-via"/></svg></button>
      <button class="tool" aria-label="Зона"><svg><use href="#i-zone"/></svg></button>
      <button class="tool" aria-label="Запретная зона"><svg><use href="#i-keepout"/></svg></button>
      <i class="sep"></i>
      <button class="tool" aria-label="Линия"><svg><use href="#i-line"/></svg></button>
      <button class="tool" aria-label="Дуга"><svg><use href="#i-arc"/></svg></button>
      <button class="tool" aria-label="Прямоугольник"><svg><use href="#i-rect"/></svg></button>
      <button class="tool" aria-label="Окружность"><svg><use href="#i-circ"/></svg></button>
      <button class="tool" aria-label="Многоугольник"><svg><use href="#i-poly"/></svg></button>
      <button class="tool" aria-label="Текст"><svg><use href="#i-text"/></svg></button>
      <button class="tool more" aria-label="Размер"><svg><use href="#i-dim"/></svg></button>
      <button class="tool" aria-label="Метка слоя"><svg><use href="#i-target"/></svg></button>
      <button class="tool" aria-label="Удалить"><svg><use href="#i-del"/></svg></button>
      <i class="sep"></i>
      <button class="tool more" aria-label="Начало координат"><svg><use href="#i-origin"/></svg></button>
      <button class="tool" aria-label="Линейка"><svg><use href="#i-ruler"/></svg></button>
    </div>

    <aside class="panel">
      <section class="appearance">
        <h2 class="panel-head">Внешний вид</h2>
        <div class="tabs" role="tablist">
          <button role="tab" class="tab active" aria-selected="true">Слои</button><button role="tab" class="tab">Объекты</button><button role="tab" class="tab">Цепи</button>
        </div>
        <div class="tab-page">
          <ul class="layers">
            <li class="current"><b style="--c:#c83434"></b><svg><use href="#i-eye"/></svg>F.Cu</li>
            <li><b style="--c:#4d7fc4"></b><svg><use href="#i-eye"/></svg>B.Cu</li>
            <li><b style="--c:#840084"></b><svg><use href="#i-eye"/></svg>F.Adhesive</li>
            <li><b style="--c:#000084"></b><svg><use href="#i-eye"/></svg>B.Adhesive</li>
            <li><b style="--c:#b4a09c"></b><svg><use href="#i-eye"/></svg>F.Paste</li>
            <li><b style="--c:#00c2c2"></b><svg><use href="#i-eye"/></svg>B.Paste</li>
            <li><b style="--c:#f0eca1"></b><svg><use href="#i-eye"/></svg>F.Silkscreen</li>
            <li><b style="--c:#e8b2a7"></b><svg><use href="#i-eye"/></svg>B.Silkscreen</li>
            <li><b style="--c:#d864ff"></b><svg><use href="#i-eye"/></svg>F.Mask</li>
            <li><b style="--c:#02ffee"></b><svg><use href="#i-eye"/></svg>B.Mask</li>
            <li><b style="--c:#c2c2c2"></b><svg><use href="#i-eye"/></svg>User.Drawings</li>
            <li><b style="--c:#5994dc"></b><svg><use href="#i-eye"/></svg>User.Comments</li>
            <li><b style="--c:#b4dbd2"></b><svg><use href="#i-eye"/></svg>User.Eco1</li>
            <li><b style="--c:#d8c852"></b><svg><use href="#i-eye"/></svg>User.Eco2</li>
            <li><b style="--c:#d0d2cd"></b><svg><use href="#i-eye"/></svg>Edge.Cuts</li>
            <li><b style="--c:#ff26e2"></b><svg><use href="#i-eye"/></svg>Margin</li>
            <li><b style="--c:#ff26e2"></b><svg><use href="#i-eye"/></svg>F.Courtyard</li>
            <li><b style="--c:#26e9ff"></b><svg><use href="#i-eye"/></svg>B.Courtyard</li>
            <li><b style="--c:#afafaf"></b><svg><use href="#i-eye"/></svg>F.Fab</li>
            <li><b style="--c:#585d84"></b><svg><use href="#i-eye"/></svg>B.Fab</li>
            <li><b style="--c:#c2c2c2"></b><svg><use href="#i-eye"/></svg>User.1</li>
            <li><b style="--c:#5994dc"></b><svg><use href="#i-eye"/></svg>User.2</li>
            <li><b style="--c:#b4dbd2"></b><svg><use href="#i-eye"/></svg>User.3</li>
            <li><b style="--c:#d8c852"></b><svg><use href="#i-eye"/></svg>User.4</li>
            <li><b style="--c:#c2c2c2"></b><svg><use href="#i-eye"/></svg>User.5</li>
            <li><b style="--c:#5994dc"></b><svg><use href="#i-eye"/></svg>User.6</li>
            <li><b style="--c:#b4dbd2"></b><svg><use href="#i-eye"/></svg>User.7</li>
            <li><b style="--c:#d8c852"></b><svg><use href="#i-eye"/></svg>User.8</li>
            <li><b style="--c:#e8b2b0"></b><svg><use href="#i-eye"/></svg>User.9</li>
          </ul>
          <button class="expander">Параметры отображения слоёв</button>
        </div>
        <div class="presets">
          <label for="preset">Наборы (Ctrl+Tab):</label>
          <div class="combo"><select id="preset"><option>-----</option></select><svg><use href="#c-down"/></svg></div>
        </div>
      </section>
      <section class="filter">
        <h2 class="panel-head">Фильтр выделения</h2>
        <div class="checks">
          <label><input type="checkbox" checked>Все элементы</label><label><input type="checkbox" checked>Заблокированные</label>
          <label><input type="checkbox" checked>Посад.места</label><label><input type="checkbox" checked>Текст</label>
          <label><input type="checkbox" checked>Дорожки</label><label><input type="checkbox" checked>Перех.отв.</label>
          <label><input type="checkbox" checked>Конт.пл.</label><label><input type="checkbox" checked>Графика</label>
          <label><input type="checkbox" checked>Зоны</label><label><input type="checkbox" checked>Области запрета</label>
          <label><input type="checkbox" checked>Размеры</label><label><input type="checkbox" checked>Прочие элементы</label>
        </div>
      </section>
    </aside>
  </main>

  <dl class="stats stats-main">
    <div><dt>Конт.пл.</dt><dd>0</dd></div><div><dt>Перех.отв.</dt><dd>0</dd></div><div><dt>Сегменты дорожек</dt><dd>0</dd></div><div><dt>Цепи</dt><dd>0</dd></div><div><dt>Не разведено</dt><dd>0</dd></div>
  </dl>
  <footer class="status">
    <span class="st-first"></span><span class="st-z">Z 1,05</span><span class="st-xy">X 309,8800&#160; Y -2,5400</span><span class="st-d">dx 309,8800&#160; dy -2,5400&#160; dist 309,8904</span><span class="st-grid">grid X 2,5400&#160; Y 2,5400</span><span class="st-unit">мм</span><span class="st-blank"></span><span class="st-last"></span>
  </footer>
</div>

<div class="window" role="dialog" aria-label="Обозреватель библиотек посад.мест">
  <header class="titlebar titlebar-win">
    <svg class="app-icon"><use href="#i-fpbrowse"/></svg>
    <h2 class="title">Module — C:\Program Files\KiCad\6.0\share\kicad\footprints\/Module.pretty — Обозреватель библиотек посад.мест</h2>
    <div class="win-buttons">
      <button aria-label="Свернуть"><svg><use href="#w-min"/></svg></button>
      <button aria-label="Развернуть"><svg><use href="#w-max"/></svg></button>
      <button aria-label="Закрыть"><svg><use href="#w-close"/></svg></button>
    </div>
  </header>
  <nav class="menu menu-win"><button>Файл</button><button>Вид</button><button>Справка</button></nav>
  <div class="toolbar toolbar-win">
    <button class="tool" aria-label="Предыдущее"><svg><use href="#i-libprev"/></svg></button>
    <button class="tool" aria-label="Следующее"><svg><use href="#i-libnext"/></svg></button>
    <i class="sep"></i>
    <button class="tool" aria-label="Обновить"><svg><use href="#i-refresh"/></svg></button>
    <button class="tool" aria-label="Увеличить"><svg><use href="#i-zin"/></svg></button>
    <button class="tool" aria-label="Уменьшить"><svg><use href="#i-zout"/></svg></button>
    <button class="tool" aria-label="Вписать"><svg><use href="#i-zfit"/></svg></button>
    <button class="tool" aria-label="Масштаб выделения"><svg><use href="#i-zsel"/></svg></button>
    <i class="sep"></i>
    <button class="tool" aria-label="3D просмотр"><svg><use href="#i-3d"/></svg></button>
    <button class="tool" aria-label="Вставить на плату"><svg><use href="#i-fpins"/></svg></button>
    <i class="sep"></i>
    <div class="combo combo-l"><select aria-label="Сетка"><option>Сетка: 2,5400 мм (0,1000 ")</option></select><svg><use href="#c-down"/></svg></div>
    <i class="sep"></i>
    <div class="combo combo-m"><select aria-label="Масштаб"><option>Автомасштаб</option></select><svg><use href="#c-down"/></svg></div>
  </div>
  <div class="browser">
    <div class="side-tools side-win">
      <button class="tool on" aria-label="Выбор"><svg><use href="#i-arrow"/></svg></button>
      <button class="tool" aria-label="Линейка"><svg><use href="#i-ruler"/></svg></button>
      <i class="sep"></i>
      <button class="tool on" aria-label="Сетка"><svg><use href="#i-grid"/></svg></button>
      <button class="tool" aria-label="Полярные координаты"><svg><use href="#i-polar"/></svg></button>
      <button class="tool" aria-label="Дюймы"><svg><use href="#i-in"/></svg></button>
      <button class="tool" aria-label="Милы"><svg><use href="#i-mil"/></svg></button>
      <button class="tool on" aria-label="Миллиметры"><svg><use href="#i-mm"/></svg></button>
      <button class="tool" aria-label="Перекрестие"><svg><use href="#i-cursor"/></svg></button>
      <i class="sep"></i>
      <button class="tool on" aria-label="Номера контактов"><svg><use href="#i-padnum"/></svg></button>
      <button class="tool" aria-label="Контур контактов"><svg><use href="#i-fpsk"/></svg></button>
      <button class="tool" aria-label="Контур текста"><svg><use href="#i-textsk"/></svg></button>
      <button class="tool" aria-label="Контур графики"><svg><use href="#i-graphsk"/></svg></button>
    </div>
    <section class="pane pane-libs">
      <label class="search"><svg><use href="#i-lens"/></svg><input type="text" placeholder="Фильтр" aria-label="Фильтр библиотек"></label>
      <ul class="list" role="listbox">
        <li>Diode_THT</li><li>Display</li><li>Display_7Segment</li><li>Ferrite_THT</li><li>Fiducial</li><li>Filter</li><li>Fuse</li><li>Heatsink</li><li>Inductor_SMD</li><li>Inductor_THT</li><li>Jumper</li><li>LED_SMD</li><li>LED_THT</li><li class="selected">Module</li><li>MountingEquipment</li><li>MountingHole</li><li>Mounting_Wuerth</li><li>NetTie</li><li>OptoDevice</li><li>Oscillator</li><li>Package_BGA</li><li>Package_CSP</li><li>Package_DFN_QFN</li><li>Package_DIP</li><li>Package_DirectFET</li><li>Package_LCC</li><li>Package_LGA</li><li>Package_QFP</li><li>Package_SIP</li><li>Package_SO</li><li>Package_SON</li><li>Package_SO_J-Lead</li><li>Package_TO_SOT_SMD</li><li>Package_TO_SOT_THT</li><li>Potentiometer_SMD</li><li>Potentiometer_THT</li>
      </ul>
      <div class="sb sb-v"><svg><use href="#s-up"/></svg><div class="track" style="--before:211;--size:129;--after:155"><span class="thumb"></span></div><svg><use href="#s-down"/></svg></div>
      <div class="sb sb-h"><svg><use href="#s-left"/></svg><div class="track" style="--before:0;--size:133;--after:16"><span class="thumb"></span></div><svg><use href="#s-right"/></svg></div>
    </section>
    <section class="pane pane-parts">
      <label class="search"><svg><use href="#i-lens"/></svg><input type="text" placeholder="Фильтр" aria-label="Фильтр посад.мест"></label>
      <ul class="list" role="listbox">
        <li>A20_OLINUXINO_LIME2</li><li>Adafruit_Feather</li><li>Adafruit_Feather_32u4_FONA</li><li>Adafruit_Feather_32u4_FONA_WithMountingHoles</li><li>Adafruit_Feather_32u4_RFM</li><li>Adafruit_Feather_32u4_RFM_WithMountingHoles</li><li>Adafruit_Feather_M0_RFM</li><li>Adafruit_Feather_M0_RFM_WithMountingHoles</li><li>Adafruit_Feather_M0_Wifi</li><li>Adafruit_Feather_M0_Wifi_WithMountingHoles</li><li>Adafruit_Feather_WICED</li><li>Adafruit_Feather_WICED_WithMountingHoles</li><li>Adafruit_Feather_WithMountingHoles</li><li>Adafruit_HUZZAH_ESP8266_breakout</li><li>Adafruit_HUZZAH_ESP8266_breakout_WithMountingHoles</li><li>Arduino_Nano</li><li>Arduino_Nano_WithMountingHoles</li><li>Arduino_UNO_R2</li><li>Arduino_UNO_R2_WithMountingHoles</li><li>Arduino_UNO_R3</li><li>Arduino_UNO_R3_WithMountingHoles</li><li>BeagleBoard_PocketBeagle</li><li>Carambola2</li><li>Maple_Mini</li><li>Onion_Omega2+</li><li class="selected">Onion_Omega2S</li><li>Pololu_Breakout-16_15.2x20.3mm</li><li>Raspberry_Pi_Zero_Socketed_THT_FaceDown_MountingHoles</li><li>ST_Morpho_Connector_144_STLink</li><li>ST_Morpho_Connector_144_STLink_MountingHoles</li><li>Sipeed-M1</li><li>Texas_EUK_R-PDSS-T7_THT</li><li>Texas_EUS_R-PDSS-T5_THT</li><li>Texas_EUW_R-PDSS-T7_THT</li><li>WEMOS_D1_mini_light</li>
      </ul>
      <div class="sb sb-h"><svg><use href="#s-left"/></svg><div class="track" style="--before:0;--size:243;--after:23"><span class="thumb"></span></div><svg><use href="#s-right"/></svg></div>
    </section>
    <section class="viewport viewport-win">
      <svg class="canvas">
        <defs>
          <pattern id="dots-win" x="5" y="26.400" width="28.720" height="28.720" patternUnits="userSpaceOnUse"><rect width="1.200" height="1.200" fill="#6f7c89"/></pattern>
          <pattern id="pads-side" y="106" width="17" height="14.400" patternUnits="userSpaceOnUse"><rect width="17" height="10" fill="#c83434"/></pattern>
          <pattern id="pads-low" x="257.600" width="14.400" height="17" y="468" patternUnits="userSpaceOnUse"><rect width="9.500" height="17" fill="#c83434"/></pattern>
        </defs>
        <rect width="100%" height="100%" fill="url(#dots-win)"/>
        <path d="M349.500 0V552M0 284.500H696" stroke="#b4c4d0"/>
        <path d="M234.500 476V105L247 90.500H461.500V476.500H234.500" fill="none" stroke="#9fb0bb"/>
        <path d="M228 89.500H462" stroke="#f6d5ee" stroke-width="2.500"/>
        <path d="M462 90V105M233.500 462V477H255M462 462V477H442" fill="none" stroke="#dfe8d4" stroke-width="1.500"/>
        <rect x="223.500" y="88.500" width="249" height="399" fill="none" stroke="#a83cb4" stroke-width="1.200"/>
        <g transform="translate(227 0)"><rect y="106" width="17" height="356" fill="url(#pads-side)"/></g>
        <g transform="translate(454 0)"><rect y="106" width="17" height="356" fill="url(#pads-side)"/></g>
        <rect x="257.600" y="468" width="182.500" height="17" fill="url(#pads-low)"/>
        <rect x="248.500" y="434.500" width="28" height="27" fill="none" stroke="#9fb0bb"/>
        <circle cx="263.500" cy="448.500" r="10.500" fill="none" stroke="#b4c4d0"/>
        <rect x="326" y="264" width="68" height="68" fill="#c83434"/>
        <g class="fp-text">
          <text x="224" y="79" class="fp-ref fp-silk">REF**</text>
          <text x="325" y="258" class="fp-ref">REF**</text>
          <text x="281" y="120" class="fp-name">Onion_Omega2S</text>
          <text x="360" y="313" text-anchor="middle" class="fp-pad">64</text>
        </g>
        <circle cx="360" cy="298" r="9" fill="#1ac4d2"/>
      </svg>
      <div class="sb sb-v"><svg><use href="#s-up"/></svg><div class="track" style="--before:250;--size:16;--after:252"><span class="thumb"></span></div><svg><use href="#s-down"/></svg></div>
      <div class="sb sb-h"><svg><use href="#s-left"/></svg><div class="track" style="--before:322;--size:17;--after:323"><span class="thumb"></span></div><svg><use href="#s-right"/></svg></div>
    </section>
  </div>
  <dl class="stats">
    <div><dt>Конт.пл.</dt><dd>90</dd></div><div><dt>Перех.отв.</dt><dd>0</dd></div><div><dt>Сегменты дорожек</dt><dd>0</dd></div><div><dt>Цепи</dt><dd>0</dd></div><div><dt>Не разведено</dt><dd>0</dd></div>
  </dl>
  <footer class="status status-win">
    <span class="st-first"></span><span class="st-z">Z 3,16</span><span class="st-xy">X -43,1800&#160; Y 17,7800</span><span class="st-d">dx -43,1800&#160; dy 17,7800&#160; dist 46,6973</span><span class="st-grid">grid X 2,5400&#160; Y 2,5400</span><span class="st-unit">мм</span><span class="st-blank"></span><span class="st-last"></span>
    <svg class="grip" viewBox="0 0 12 12"><path d="M9 1h2v2H9zM9 5h2v2H9zM9 9h2v2H9zM5 5h2v2H5zM5 9h2v2H5zM1 9h2v2H1z" fill="#bdbdbd"/></svg>
  </footer>
</div>
</body>
</html>
```
FILE: styles.css
```css
* { box-sizing: border-box; }

body {
  margin: 0;
  font: 11px/15px "Open Sans", "Noto Sans", sans-serif;
  color: #000;
  background: #f0f0f0;
  overflow: hidden;
}

h1, h2, ul, dl, dd { margin: 0; padding: 0; font-size: inherit; font-weight: 400; }
ul { list-style: none; }
button, input, select { font: inherit; color: inherit; margin: 0; }
button { border: 0; padding: 0; background: none; }
svg { display: block; flex: none; }
.sprite { position: absolute; width: 0; height: 0; visibility: hidden; }

.unit { font: 600 12px "Open Sans", sans-serif; fill: #545454; }
.glyph { font: 600 10px "Open Sans", sans-serif; fill: #545454; }
.glyph-i { font-style: italic; }

.app { display: flex; flex-direction: column; height: 100vh; }

/* Title bars and menus */
.titlebar { display: flex; align-items: center; background: #fff; flex: none; padding-bottom: 3px; }
.titlebar-main { height: 24px; padding-left: 2px; color: #999; }
.titlebar-win { height: 30px; padding-left: 7px; }
.app-icon { width: 16px; height: 16px; }
.title { flex: 1; margin-left: 5px; white-space: nowrap; }
.win-buttons { display: flex; }
.win-buttons button { width: 46px; height: 21px; display: grid; place-items: center; }
.win-buttons svg { width: 12px; height: 12px; }

.menu { display: flex; flex: none; background: #fff; align-items: center; gap: 15px; padding-bottom: 1px; }
.menu-main { height: 18px; padding-left: 7px; color: #6d6d6d; }
.menu-win { height: 17px; padding-left: 7px; }

/* Toolbars */
.toolbar { display: flex; align-items: center; gap: 3px; flex: none; background: #f0f0f0; }
.toolbar-main { height: 38px; padding-left: 4px; }
.toolbar-sub { height: 37px; padding-left: 5px; }
.toolbar-win { height: 39px; padding-left: 3px; }
.tool { position: relative; width: 32px; height: 32px; display: grid; place-items: center; flex: none; }
.tool svg { width: 24px; height: 24px; overflow: visible; }
.tool.on { background: #c0dcf3; border: 1px solid #90c8f6; }
.tool.more::after {
  content: ""; position: absolute; right: 0; bottom: 0;
  border: 4px solid; border-color: transparent #000 #000 transparent;
}
.toolbar .sep { width: 5px; height: 29px; background: linear-gradient(#8a8a8a, #8a8a8a) center / 1px 100% no-repeat; }

.combo { position: relative; display: flex; align-items: center; height: 23px; background: #e1e1e1; border: 1px solid #adadad; }
.combo select { appearance: none; flex: 1; min-width: 0; height: 100%; border: 0; background: none; padding: 0 18px 0 3px; }
.combo > svg { position: absolute; right: 4px; width: 10px; height: 10px; color: #444; pointer-events: none; }
.combo-xl { width: 278px; }
.combo-l { width: 249px; }
.combo-m { width: 116px; }
.combo-layer { width: 136px; background: #fff; border-color: #707070; }
.combo-layer select { padding-left: 5px; }
.layer-chip { width: 14px; height: 14px; margin-left: 7px; background: #c83434; border: 1px solid #222; }

.side-tools { display: flex; flex-direction: column; gap: 3px; padding-top: 5px; flex: none; background: #f0f0f0; }
.side-tools .sep { height: 5px; width: 29px; margin-left: 2px; flex: none; background: linear-gradient(#8a8a8a, #8a8a8a) center / 100% 1px no-repeat; }
.side-left { width: 37px; padding-left: 2px; }
.side-right { width: 38px; padding-left: 2px; }
.side-win { width: 36px; padding-left: 1px; }

/* Drawing areas */
.workspace { display: flex; flex: 1; min-height: 0; }
.viewport { flex: 1; min-width: 0; display: grid; grid-template: 1fr 17px / 1fr 17px; border: 1px solid #a0a0a0; background: #f0f0f0; }
.canvas { width: 100%; height: 100%; min-height: 0; background: #001023; overflow: hidden; }
.viewport .sb-h { grid-column: 1; }

.sheet-text { font: 9px "Liberation Sans", sans-serif; fill: #b06aa8; }
.sheet-title { font: italic bold 11px "Liberation Sans", sans-serif; }
.fp-text { font-family: "DejaVu Sans Mono", monospace; fill: #a3b0ba; }
.fp-ref { font-size: 16px; stroke: #a3b0ba; stroke-width: .2px; }
.fp-silk { fill: #f0eca1; stroke: #f0eca1; stroke-width: .4px; }
.fp-name { font-size: 17px; stroke: #a3b0ba; stroke-width: .2px; }
.fp-pad { font-size: 42px; fill: #fde8e6; }

/* Scroll bars */
.sb { display: flex; align-items: center; background: #f0f0f0; min-width: 0; min-height: 0; }
.sb-v { flex-direction: column; }
.sb svg { width: 10px; height: 10px; }
.sb-v svg { margin: 4px 0; }
.sb-h svg { margin: 0 4px; }
.track { display: flex; flex: 1; align-self: stretch; min-height: 0; min-width: 0; }
.sb-v .track { flex-direction: column; }
.track::before { content: ""; flex: var(--before) 0 0; }
.track::after { content: ""; flex: var(--after) 0 0; }
.thumb { flex: var(--size) 0 0; background: #cdcdcd; }

/* Right panel */
.panel { width: 183px; flex: none; border-left: 4px solid #dcdcdc; display: flex; flex-direction: column; overflow: hidden; }
.panel-head { height: 20px; line-height: 20px; padding-left: 2px; background: #b9b9b9; white-space: nowrap; flex: none; }
.appearance { display: flex; flex-direction: column; flex: 1; min-height: 0; border-bottom: 5px solid #dcdcdc; }
.tabs { display: flex; align-items: flex-end; height: 23px; flex: none; }
.tab { height: 21px; padding: 0 7px; border: 1px solid #d9d9d9; border-left: 0; border-bottom: 0; }
.tab.active { height: 23px; padding: 0 14px 2px 8px; background: #fff; border-color: #fff; }
.tab-page { display: flex; flex-direction: column; flex: 1; min-height: 0; margin-right: 3px; background: #fff; padding: 1px 1px 0 3px; border-bottom: 1px solid #dcdcdc; }
.layers { flex: 1; min-height: 0; background: #f0f0f0; }
.layers li { position: relative; display: flex; align-items: center; height: 18px; padding-left: 17px; }
.layers b { width: 14px; height: 11px; margin-right: 6px; background: var(--c); }
.layers svg { width: 16px; height: 16px; margin-right: 5px; }
.layers .current { background: #e5e5e5; }
.layers .current::before { content: ""; position: absolute; left: 6px; border: 5px solid transparent; border-left-color: #3c3ce0; border-right: 0; }
.expander { display: flex; align-items: center; height: 27px; padding-left: 5px; color: #6d6d6d; white-space: nowrap; overflow: hidden; flex: none; }
.expander::before { content: ""; flex: none; border: 4px solid transparent; border-left: 5px solid #555; border-right: 0; margin-right: 2px; }
.presets { padding: 1px 7px 8px 6px; display: flex; flex-direction: column; gap: 1px; flex: none; }
.filter { flex: none; height: 120px; }
.checks { display: grid; grid-template-columns: 98px 1fr; padding: 5px 0 0 4px; }
.checks label { display: flex; align-items: center; gap: 3px; height: 15px; white-space: nowrap; }
.checks input { appearance: none; width: 13px; height: 13px; flex: none; border: 1px solid #333; background: #fff; display: grid; place-items: center; }
.checks input:checked::after { content: ""; width: 9px; height: 5px; border: solid #333; border-width: 0 0 1px 1px; transform: translateY(-1px) rotate(-45deg); }

/* Counters and status bars */
.stats { display: flex; height: 30px; flex: none; padding-left: 10px; line-height: 14px; white-space: nowrap; background: #f0f0f0; padding-top: 1px; }
.stats-main { padding-left: 11px; color: #6d6d6d; }
.stats div:nth-child(1) { width: 75px; }
.stats div:nth-child(2) { width: 87px; }
.stats div:nth-child(3) { width: 135px; }
.stats div:nth-child(4) { width: 58px; }
.status { display: flex; position: relative; height: 23px; flex: none; border-top: 1px solid #dcdcdc; line-height: 24px; white-space: nowrap; background: #f0f0f0; }
.status span + span { border-left: 1px solid #dcdcdc; padding-left: 4px; }
.st-first { width: 471px; }
.status-win .st-first { width: 54px; }
.st-z { width: 78px; }
.st-xy { width: 160px; }
.st-d { width: 251px; }
.st-grid { width: 184px; }
.st-unit { width: 75px; }
.st-blank { width: 173px; }
.st-last { flex: 1; }
.grip { position: absolute; right: 1px; bottom: 1px; width: 12px; height: 12px; }

/* Footprint browser window */
.window {
  position: absolute; left: 204px; top: 127px; right: 211px; bottom: 171px;
  display: flex; flex-direction: column; background: #f0f0f0;
  border: 1px solid #6d7078; box-shadow: 0 5px 14px rgba(0, 0, 0, .35);
}
.browser { display: flex; flex: 1; min-height: 0; }
.pane { display: grid; grid-template: 22px 1fr 17px / 1fr 16px; border: 1px solid #a0a0a0; background: #f0f0f0; margin-right: 4px; flex: none; }
.pane-libs { width: 202px; }
.pane-parts { width: 302px; grid-template-columns: 1fr; }
.pane .search { grid-column: 1 / -1; }
.search { display: flex; align-items: center; gap: 7px; padding-left: 5px; background: #fff; border-bottom: 1px solid #a0a0a0; }
.search svg { width: 14px; height: 14px; }
.search input { border: 0; padding: 0; flex: 1; min-width: 0; background: none; outline: 0; }
.search input::placeholder { color: #6d6d6d; opacity: 1; }
.list { background: #fff; overflow: hidden; min-height: 0; min-width: 0; }
.list li { height: 15px; padding-left: 2px; white-space: nowrap; }
.list .selected { background: #0078d7; color: #fff; }
.pane .sb-h { grid-column: 1; }
```
